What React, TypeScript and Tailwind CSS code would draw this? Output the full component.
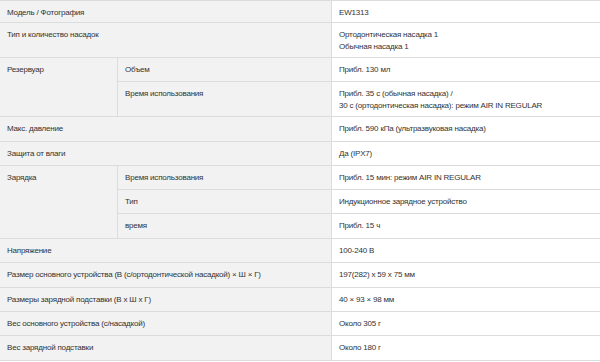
import React from 'react';

type Sub = { label: string; value: React.ReactNode; h: string };
type Row =
  | { label: string; value: React.ReactNode; h: string }
  | { label: string; subs: Sub[] };

const rows: Row[] = [
  { label: 'Модель / Фотография', value: 'EW1313', h: 'h-[22px]' },
  {
    label: 'Тип и количество насадок',
    value: (
      <>
        Ортодонтическая насадка 1
        <br />
        Обычная насадка 1
      </>
    ),
    h: 'h-[35px]',
  },
  {
    label: 'Резервуар',
    subs: [
      { label: 'Объем', value: 'Прибл. 130 мл', h: 'h-[24px]' },
      {
        label: 'Время использования',
        value: (
          <>
            Прибл. 35 с (обычная насадка) /
            <br />
            30 с (ортодонтическая насадка): режим AIR IN REGULAR
          </>
        ),
        h: 'h-[35px]',
      },
    ],
  },
  { label: 'Макс. давление', value: 'Прибл. 590 кПа (ультразвуковая насадка)', h: 'h-[25px]' },
  { label: 'Защита от влаги', value: 'Да (IPX7)', h: 'h-[24px]' },
  {
    label: 'Зарядка',
    subs: [
      { label: 'Время использования', value: 'Прибл. 15 мин: режим AIR IN REGULAR', h: 'h-[24px]' },
      { label: 'Тип', value: 'Индукционное зарядное устройство', h: 'h-[24px]' },
      { label: 'время', value: 'Прибл. 15 ч', h: 'h-[25px]' },
    ],
  },
  { label: 'Напряжение', value: '100-240 В', h: 'h-[24px]' },
  {
    label: 'Размер основного устройства (В (с/ортодонтической насадкой) × Ш × Г)',
    value: '197(282) x 59 x 75 мм',
    h: 'h-[25px]',
  },
  { label: 'Размеры зарядной подставки (В x Ш x Г)', value: '40 × 93 × 98 мм', h: 'h-[24px]' },
  { label: 'Вес основного устройства (с/насадкой)', value: 'Около 305 г', h: 'h-[24px]' },
  { label: 'Вес зарядной подставки', value: 'Около 180 г', h: 'h-[25px]' },
];

const cell = 'border border-[#dcdcdc] px-[7px] pt-[6px] pb-0 align-top leading-[12px]';
const gray = `${cell} bg-[#f2f2f2]`;
const white = `${cell} bg-white`;

export default function App() {
  return (
    <div className="w-[600px] h-[362px] overflow-hidden bg-white">
      <table
        className="w-[602px] -ml-px border-collapse table-fixed text-[8px] tracking-[-0.2px] text-[#333333]"
        style={{ fontFamily: '"Liberation Sans", Arial, sans-serif' }}
      >
        <colgroup>
          <col className="w-[118px]" />
          <col className="w-[214px]" />
          <col />
        </colgroup>
        <tbody>
          {rows.flatMap((r, i) => {
            if ('subs' in r) {
              return r.subs.map((s, j) => (
                <tr key={`${i}-${j}`} className={s.h}>
                  {j === 0 && (
                    <td rowSpan={r.subs.length} className={gray}>
                      {r.label}
                    </td>
                  )}
                  <td className={gray}>{s.label}</td>
                  <td className={white}>{s.value}</td>
                </tr>
              ));
            }
            return [
              <tr key={i} className={r.h}>
                <td colSpan={2} className={gray}>
                  {r.label}
                </td>
                <td className={white}>{r.value}</td>
              </tr>,
            ];
          })}
        </tbody>
      </table>
    </div>
  );
}
